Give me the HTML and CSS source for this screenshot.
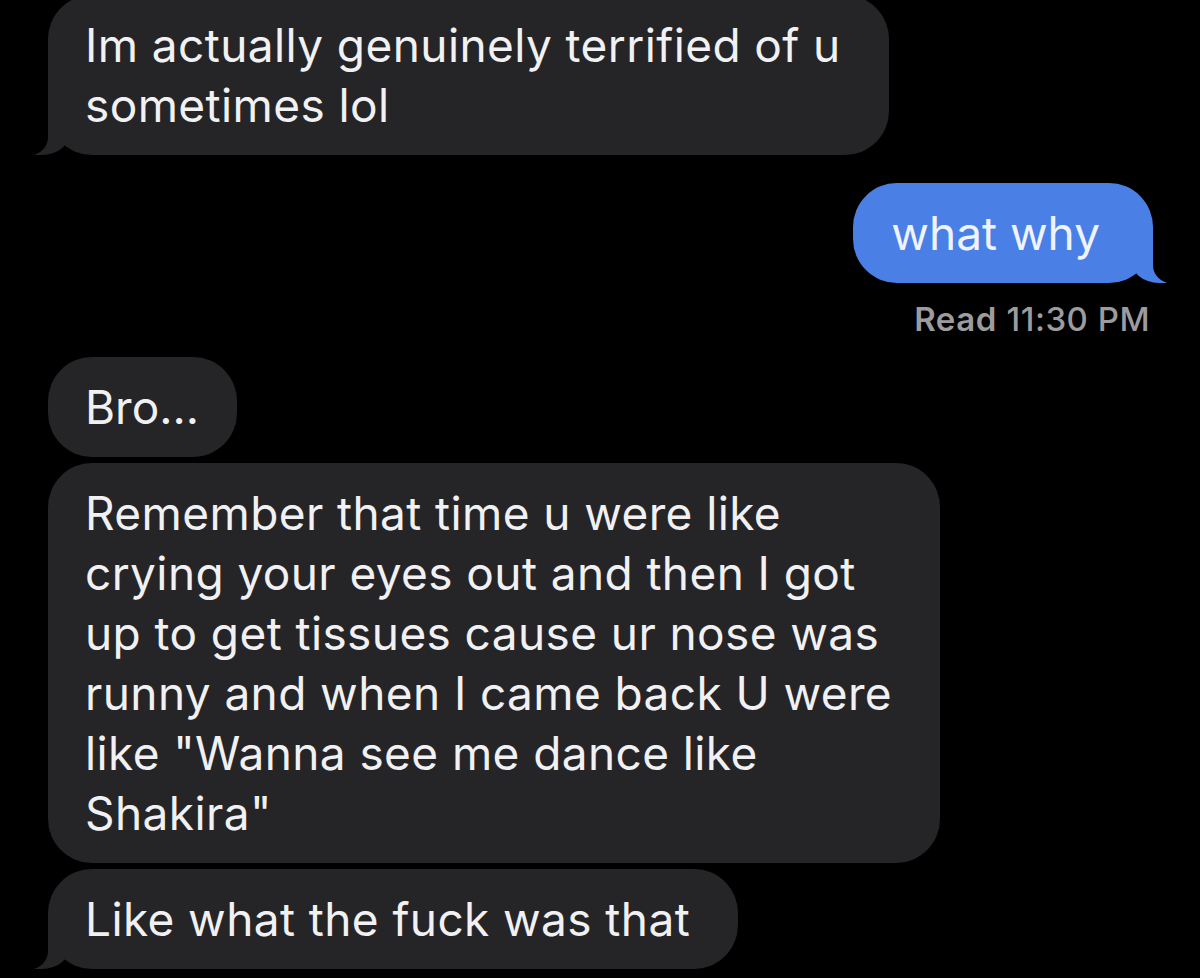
FILE: index.html
```html
<!DOCTYPE html>
<html lang="en">
<head>
<meta charset="utf-8">
<title>Messages</title>
<link rel="stylesheet" href="styles.css">
</head>
<body>
<div class="thread">
  <div class="msg them tail first">Im actually genuinely terrified of u<br>sometimes lol</div>
  <div class="msg me tail sent">what why</div>
  <div class="receipt"><span class="receipt-label">Read</span> <span class="receipt-time">11:30 PM</span></div>
  <div class="msg them short group-start">Bro...</div>
  <div class="msg them grouped">Remember that time u were like<br>crying your eyes out and then I got<br>up to get tissues cause ur nose was<br>runny and when I came back U were<br>like "Wanna see me dance like<br>Shakira"</div>
  <div class="msg them tail grouped">Like what the fuck was that</div>
</div>
</body>
</html>
```
FILE: styles.css
```css
html, body {
  margin: 0;
  padding: 0;
  background: #000;
}

body {
  width: 1200px;
  height: 978px;
  overflow: hidden;
  font-family: Inter, "Liberation Sans", Arial, sans-serif;
}

.thread {
  display: flex;
  flex-direction: column;
  align-items: flex-start;
  padding: 0 47px 0 48px;
}

.msg {
  position: relative;
  box-sizing: border-box;
  padding: 20px 48px 20px 37px;
  border-radius: 44px;
  font-size: 46px;
  line-height: 60px;
  white-space: nowrap;
  color: #f1f1f3;
  letter-spacing: 0.4px;
}

.them {
  background: #252528;
}

.me {
  background: #4a7fe6;
  color: #eef3ff;
  align-self: flex-end;
  padding: 20px 53px 20px 38px;
  letter-spacing: 0;
}

.short {
  padding-right: 38px;
  letter-spacing: 0;
}

.first {
  margin-top: -5px;
}

.sent {
  margin-top: 28px;
}

.group-start {
  margin-top: 19px;
}

.grouped {
  margin-top: 6px;
}

.msg.tail::before,
.msg.tail::after {
  content: "";
  position: absolute;
  bottom: 0;
  height: 45px;
}

.them.tail::before {
  left: -13px;
  width: 36px;
  background: #252528;
  border-bottom-right-radius: 29px 25px;
}

.them.tail::after {
  left: -47px;
  width: 47px;
  background: #000;
  border-bottom-right-radius: 18px;
}

.me.tail::before {
  right: -13px;
  width: 36px;
  background: #4a7fe6;
  border-bottom-left-radius: 29px 25px;
}

.me.tail::after {
  right: -47px;
  width: 47px;
  background: #000;
  border-bottom-left-radius: 18px;
}

.receipt {
  align-self: flex-end;
  margin-top: 17px;
  margin-right: 3px;
  font-size: 33px;
  line-height: 38px;
  letter-spacing: 0.5px;
  color: #9c9c9f;
}

.receipt-label {
  font-weight: 600;
}

.receipt-time {
  font-weight: 500;
}
```
